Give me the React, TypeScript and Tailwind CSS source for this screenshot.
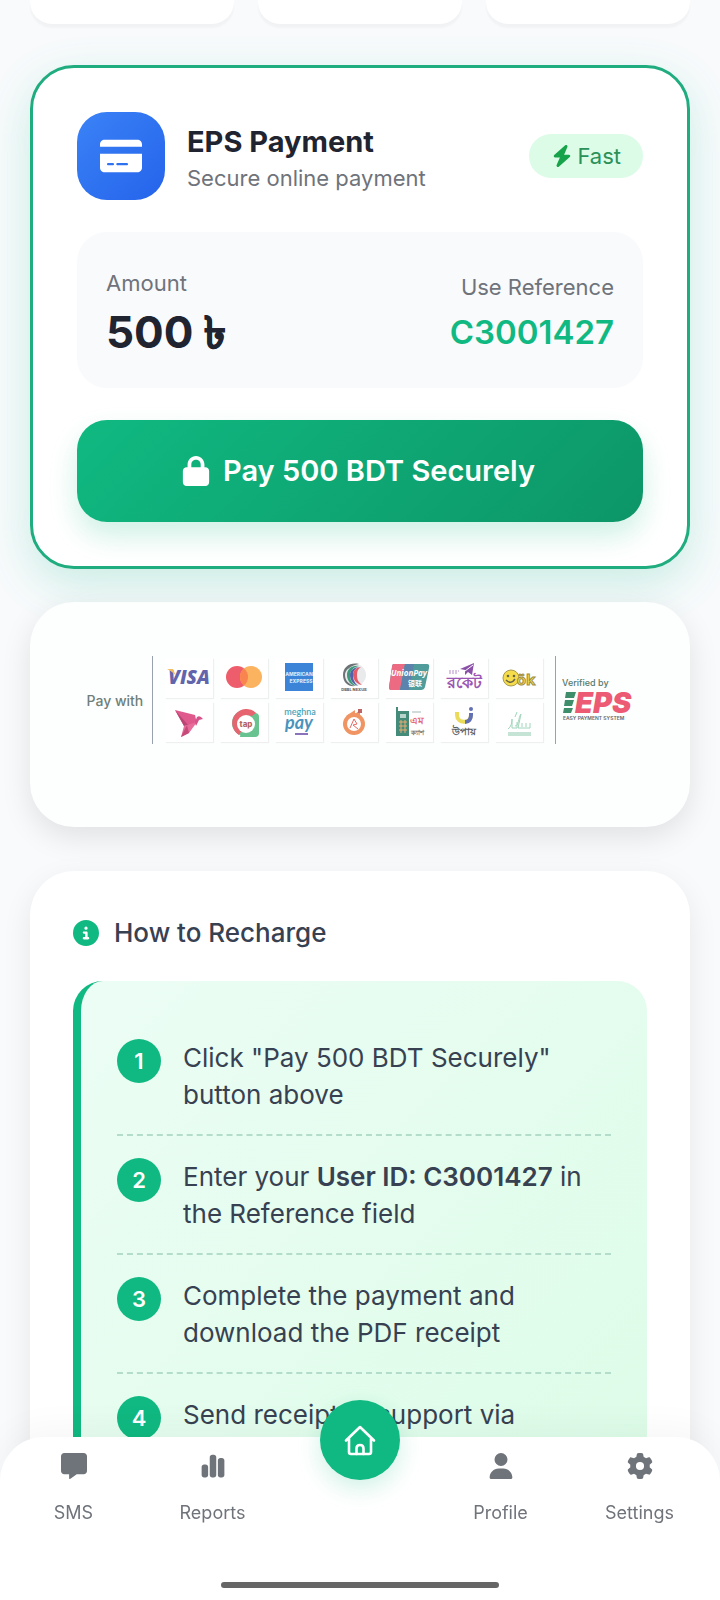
import type { ReactNode } from 'react';
import { FaBolt, FaChartSimple, FaCircleInfo, FaCreditCard, FaGear, FaLock, FaMessage, FaUser } from 'react-icons/fa6';

const steps: { id: number; text: ReactNode }[] = [
  { id: 1, text: 'Click "Pay 500 BDT Securely" button above' },
  {
    id: 2,
    text: (
      <>
        Enter your <strong className="font-semibold">User ID: C3001427</strong> in the Reference field
      </>
    ),
  },
  { id: 3, text: 'Complete the payment and download the PDF receipt' },
  { id: 4, text: 'Send receipt to support via WhatsApp for confirmation' },
];

const brands: { name: string; art: ReactNode }[] = [
  {
    name: 'Visa',
    art: (
      <>
        <text x="24" y="26" textAnchor="middle" fontSize="19" fontWeight="800" fontStyle="italic" fill="#6265ab" fontFamily="Open Sans">
          VISA
        </text>
        <path d="M2 11h6l3 7c-2-3-5-5-9-7z" fill="#f2bd63" />
      </>
    ),
  },
  {
    name: 'Mastercard',
    art: (
      <>
        <circle cx="17" cy="19" r="11" fill="#ee5d6b" />
        <circle cx="31" cy="19" r="11" fill="#fbb360" />
        <path d="M24 10.500a11 11 0 0 1 0 17a11 11 0 0 1 0-17z" fill="#f98450" />
      </>
    ),
  },
  {
    name: 'American Express',
    art: (
      <>
        <rect x="10" y="5" width="28" height="28" fill="#3b84d8" />
        <text x="24" y="18" textAnchor="middle" fontSize="5" fontWeight="800" fill="#d5e6f8" fontFamily="Inter">
          AMERICAN
        </text>
        <text x="26" y="25" textAnchor="middle" fontSize="5" fontWeight="800" fill="#d5e6f8" fontFamily="Inter">
          EXPRESS
        </text>
      </>
    ),
  },
  {
    name: 'DBBL Nexus',
    art: (
      <>
        <circle cx="25" cy="17" r="11" fill="#e8eaeb" />
        <path d="M29 6c-9-2-16 3-16 11s6 12 12 11c-7-2-10-6-10-11s5-9 14-11z" fill="#6d7276" />
        <path d="M29 8c-7-1-12 3-12 9s4 10 9 11c-5-4-6-7-6-11s3-8 9-9z" fill="#3a9a79" />
        <path d="M30 9c-6 0-10 3-10 8s3 9 8 11c-4-4-5-7-5-11s2-7 7-8z" fill="#5362a8" />
        <path d="M31 9c-6 1-8 4-8 8s3 9 9 10c-4-3-5-6-5-10s1-6 4-8z" fill="#e45a68" />
        <text x="24" y="33" textAnchor="middle" fontSize="4" fontWeight="800" fill="#666" fontFamily="Inter">
          DBBL NEXUS
        </text>
      </>
    ),
  },
  {
    name: 'UnionPay',
    art: (
      <>
        <path d="M9 6h33q3 0 2 4l-4 19q-1 3-4 3H6q-2 0-2-3l3-20q0-3 2-3z" fill="#4f9c9b" />
        <path d="M9 6h11l-5 26H6q-2 0-2-3l3-20q0-3 2-3z" fill="#ec6b83" />
        <path d="M20 6h9l-5 26h-9z" fill="#5b83ab" />
        <text x="24" y="18" textAnchor="middle" fontSize="8" fontWeight="700" fontStyle="italic" fill="#fff" fontFamily="Open Sans">
          UnionPay
        </text>
        <text x="30" y="28" textAnchor="middle" fontSize="7" fontWeight="700" fill="#fff" fontFamily="Noto Sans CJK SC">
          银联
        </text>
      </>
    ),
  },
  {
    name: 'Rocket',
    art: (
      <>
        <path d="M34 5l-2 12-4-3-3 3v-5l-5-1z" fill="#8b50a8" />
        <path d="M33 7l-8 6" stroke="#fff" />
        <path d="M9 13h10M9 15h8" stroke="#b58ac8" strokeDasharray="2 1" />
        <text x="24" y="30" textAnchor="middle" fontSize="16" fontWeight="700" fill="#9c55b2" fontFamily="sans-serif">
          রকেট
        </text>
      </>
    ),
  },
  {
    name: 'OK Wallet',
    art: (
      <>
        <circle cx="16" cy="20" r="8" fill="#f5dc4a" stroke="#a99b50" />
        <path d="M11 22q5 5 9-1" fill="none" stroke="#69644d" strokeWidth="1.500" />
        <circle cx="13" cy="18" r="1.300" fill="#69644d" />
        <circle cx="19" cy="18" r="1.300" fill="#69644d" />
        <text x="31" y="27" textAnchor="middle" fontSize="15" fontWeight="700" fill="#f5dc4a" stroke="#a18d45" strokeWidth="1" fontFamily="Open Sans">
          ök
        </text>
      </>
    ),
  },
  {
    name: 'bKash',
    art: (
      <>
        <path d="M10 8l20 5 2 9-13 2z" fill="#e0598d" />
        <path d="M10 8l13 15-4 1z" fill="#b94674" />
        <path d="M19 24l13-4-8 11-8 4z" fill="#e86c9a" />
        <path d="M22 23l2 8-8 4z" fill="#c44a7a" />
        <path d="M30 20l2-5q3-2 6 2l-4 1-3 6z" fill="#d7528a" />
      </>
    ),
  },
  {
    name: 'tap',
    art: (
      <>
        <path d="M24 11h11q4 0 4 4v16q0 4-4 4H20z" fill="#68c391" />
        <circle cx="25" cy="21" r="13" fill="#68c391" />
        <path d="M36 11a14 14 0 1 0-17 22l3-5a9 9 0 0 1 10-14z" fill="#e66470" />
        <circle cx="26" cy="22" r="9" fill="#fff" />
        <text x="26" y="25" textAnchor="middle" fontSize="8" fontWeight="800" fill="#b5645f" fontFamily="Inter">
          tap
        </text>
      </>
    ),
  },
  {
    name: 'Meghna Pay',
    art: (
      <>
        <text x="25" y="13" textAnchor="middle" fontSize="9" fontWeight="600" fill="#4aa4b7" fontFamily="Lato">
          meghna
        </text>
        <text x="24" y="27" textAnchor="middle" fontSize="18" fontWeight="700" fontStyle="italic" fill="#4a93bd" fontFamily="Lato">
          pay
        </text>
        <path d="M20 32h13" stroke="#8a72bd" strokeWidth="2" />
      </>
    ),
  },
  {
    name: 'Islamic Wallet',
    art: (
      <>
        <circle cx="24" cy="22" r="9" fill="#fff" stroke="#ef9462" strokeWidth="4" />
        <path d="M16 14l9-6v4l5-4v7z" fill="#ef9462" />
        <path d="M28 7h4v4h-4z" fill="#bd6665" />
        <path d="M24 17l3 5-4 1 5 4M20 26l4-9" fill="none" stroke="#e46a62" />
      </>
    ),
  },
  {
    name: 'My Cash',
    art: (
      <>
        <path d="M11 5h2v4h11v25H11z" fill="#448b7a" />
        <path d="M15 12h6v4h-6z" fill="#b8d5cd" />
        <path d="M14 20h8M14 24h8M14 28h8M16 18v13M20 18v13" stroke="#e8ac70" strokeWidth="1" />
        <path d="M27 10h9" stroke="#a3b7b2" strokeWidth="1" />
        <text x="32" y="22" textAnchor="middle" fontSize="10" fontWeight="700" fill="#e26571" fontFamily="sans-serif">
          এম
        </text>
        <text x="32" y="33" textAnchor="middle" fontSize="7" fontWeight="700" fill="#777" fontFamily="sans-serif">
          ক্যাশ
        </text>
      </>
    ),
  },
  {
    name: 'Upay',
    art: (
      <>
        <path d="M17 10v3c0 9 14 9 14 0v-1" fill="none" stroke="#eadb58" strokeWidth="4" />
        <path d="M25 20c4 0 6-3 6-7v-2" fill="none" stroke="#6270b5" strokeWidth="4" />
        <circle cx="31" cy="7" r="2" fill="#6270b5" />
        <text x="24" y="33" textAnchor="middle" fontSize="10" fontWeight="700" fill="#5b5c5e" fontFamily="sans-serif">
          উপায়
        </text>
      </>
    ),
  },
  {
    name: 'Islami Bank',
    art: (
      <>
        <path d="M13 27c3-2 4-6 4-10v9h5v-6M20 24c4 0 3-8 6-12l-3 14h12M20 15l2-5M27 25v-4M31 25v-4M35 26v-5" fill="none" stroke="#9fd6ba" strokeWidth="1" />
        <path d="M13 31h23M13 33h23" stroke="#8cc9ac" strokeWidth="1" />
      </>
    ),
  },
];

const leftTabs = [
  { label: 'SMS', Icon: FaMessage },
  { label: 'Reports', Icon: FaChartSimple },
];

const rightTabs = [
  { label: 'Profile', Icon: FaUser },
  { label: 'Settings', Icon: FaGear },
];

function NavTab({ label, Icon }: (typeof leftTabs)[number]) {
  return (
    <a href={`#${label.toLowerCase()}`} className="flex w-[139px] flex-col items-center gap-5 text-[18px] leading-7 text-[#6f737a]">
      <Icon size={26} />
      <span>{label}</span>
    </a>
  );
}

function HomeIcon() {
  return (
    <svg viewBox="0 0 32 32" className="size-8" fill="none" stroke="currentColor" strokeWidth="2.6" strokeLinecap="round" strokeLinejoin="round">
      <path d="M2 16.500L16 3l14 13.500M5 14.500V28q0 2 2 2h18q2 0 2-2V14.500" />
      <path d="M12.500 30v-5.500q0-3.500 3.500-3.500t3.500 3.500V30" />
    </svg>
  );
}

function EpsLogo() {
  return (
    <svg viewBox="0 0 72 44" className="w-[72px]" role="img" aria-label="Verified by EPS">
      <text x="0" y="8" fontSize="9" fill="#58796c" fontFamily="Inter" fontWeight="500">
        Verified by
      </text>
      <path d="M4 14h10l-2 6H3zM3 22h9l-2 6H2zM2 30h9l-2 5H1z" fill="#3f8e6b" />
      <text x="13" y="35" fontSize="29" fontWeight="900" fontStyle="italic" fill="#ec5a73" fontFamily="Inter">
        EPS
      </text>
      <text x="1" y="42" fontSize="5" fontWeight="600" fill="#666" fontFamily="Inter">
        EASY PAYMENT SYSTEM
      </text>
    </svg>
  );
}

export default function App() {
  return (
    <div className="relative h-screen overflow-hidden bg-[#f8fafc] font-['Inter',sans-serif] text-[#374151]">
      <main className="px-[30px]">
        {/* Quick amounts */}
        <div className="grid grid-cols-3 gap-6">
          <div className="h-6 rounded-b-[22px] bg-white shadow-[0_4px_2px_rgba(0,0,0,0.03)]" />
          <div className="h-6 rounded-b-[22px] bg-white shadow-[0_4px_2px_rgba(0,0,0,0.03)]" />
          <div className="h-6 rounded-b-[22px] bg-white shadow-[0_4px_2px_rgba(0,0,0,0.03)]" />
        </div>

        {/* Payment card */}
        <section className="mt-[41px] rounded-[44px] border-3 border-[#1fac7e] bg-white px-11 pt-11 pb-11 shadow-[0_15px_46px_rgba(16,185,129,0.2)]">
          <div className="flex items-center">
            <div className="flex size-[88px] items-center justify-center rounded-[30px] bg-linear-to-br from-[#3b82f6] to-[#2563eb] text-white">
              <FaCreditCard size={42} />
            </div>
            <div className="ml-[22px] pt-1">
              <h2 className="text-[29px] leading-10 font-bold text-[#1f2430]">EPS Payment</h2>
              <p className="text-[22px] leading-8 text-[#6f737a]">Secure online payment</p>
            </div>
            <span className="ml-auto flex h-11 items-center gap-1 rounded-full bg-[#dcfce7] px-[22px] text-[22px] text-[#2a9159]">
              <FaBolt size={22} className="text-[#16a34a]" />
              Fast
            </span>
          </div>

          <div className="mt-8 flex h-[156px] items-center justify-between rounded-[30px] bg-[#f9fafc] px-[29px] pt-3">
            <div>
              <div className="text-[22px] leading-8 text-[#6f737a]">Amount</div>
              <div className="text-[44px] leading-[66px] font-bold text-[#1f2430]">
                500 <span className="[-webkit-text-stroke:1px_#1f2430]">৳</span>
              </div>
            </div>
            <div className="text-right">
              <div className="text-[22px] leading-8 text-[#6f737a]">Use Reference</div>
              <div className="text-[33px] leading-[58px] font-semibold text-[#10b981]">C3001427</div>
            </div>
          </div>

          <button
            type="button"
            className="mt-8 flex h-[102px] w-full items-center justify-center gap-3 rounded-[30px] bg-linear-135 from-[#10b981] to-[#0d9668] pr-1 text-[29px] font-semibold text-white shadow-[0_14px_28px_rgba(16,185,129,0.2)]"
          >
            <FaLock size={30} />
            Pay 500 BDT Securely
          </button>
        </section>

        {/* Accepted methods */}
        <section className="mt-[33px] flex h-[225px] items-start justify-center rounded-[44px] bg-[#fdfefe] pt-[54px] shadow-[0_10px_30px_rgba(0,0,0,0.1)]">
          <div className="flex h-[88px] items-center">
            <span className="w-[65px] text-[14px] font-medium text-[#6f7f78]">Pay with</span>
            <div className="h-full w-px bg-gray-400" />
            <div className="ml-3 grid grid-cols-7 gap-x-[7px] gap-y-1">
              {brands.map((brand) => (
                <svg key={brand.name} viewBox="0 0 48 40" role="img" aria-label={brand.name} className="w-12 bg-white shadow-[1px_1px_1px_rgba(0,0,0,0.06)]">
                  {brand.art}
                </svg>
              ))}
            </div>
            <div className="mr-[6px] ml-3 h-full w-px bg-gray-400" />
            <EpsLogo />
          </div>
        </section>

        {/* Instructions */}
        <section className="mt-11 rounded-[44px] bg-white px-[43px] pt-11 pb-11 shadow-[0_10px_30px_rgba(0,0,0,0.08)]">
          <h3 className="flex items-center gap-[15px] text-[26px] leading-9 font-medium">
            <FaCircleInfo size={26} className="text-[#10b981]" />
            How to Recharge
          </h3>
          <ol className="mt-[30px] rounded-[30px] border-l-8 border-[#10b981] bg-linear-135 from-[#ecfdf5] to-[#dcfce7] p-9">
            {steps.map((step) => (
              <li key={step.id} className="flex gap-[22px] border-b-2 border-dashed border-[#b4dccb] pt-[22px] pb-[21px] last:border-b-0">
                <span className="flex size-11 shrink-0 items-center justify-center rounded-full bg-[#10b981] text-[22px] font-semibold text-white">
                  {step.id}
                </span>
                <p className="text-[26px] leading-[37px]">{step.text}</p>
              </li>
            ))}
          </ol>
        </section>
      </main>

      {/* Bottom navigation */}
      <nav className="fixed inset-x-0 bottom-0 flex h-[163px] items-start justify-between rounded-t-[44px] bg-white pt-4 pr-[11px] pl-1 shadow-[0_-8px_36px_rgba(0,0,0,0.04)]">
        <div className="flex">
          {leftTabs.map((tab) => (
            <NavTab key={tab.label} {...tab} />
          ))}
        </div>
        <div className="flex">
          {rightTabs.map((tab) => (
            <NavTab key={tab.label} {...tab} />
          ))}
        </div>
        <a
          href="#home"
          aria-label="Home"
          className="absolute -top-[37px] left-1/2 flex size-20 -translate-x-1/2 items-center justify-center rounded-full bg-[#10b981] text-white shadow-[0_8px_24px_rgba(16,185,129,0.2)]"
        >
          <HomeIcon />
        </a>
        <div className="absolute bottom-3 left-1/2 h-[6px] w-[278px] -translate-x-1/2 rounded-full bg-[#666]" />
      </nav>
    </div>
  );
}
